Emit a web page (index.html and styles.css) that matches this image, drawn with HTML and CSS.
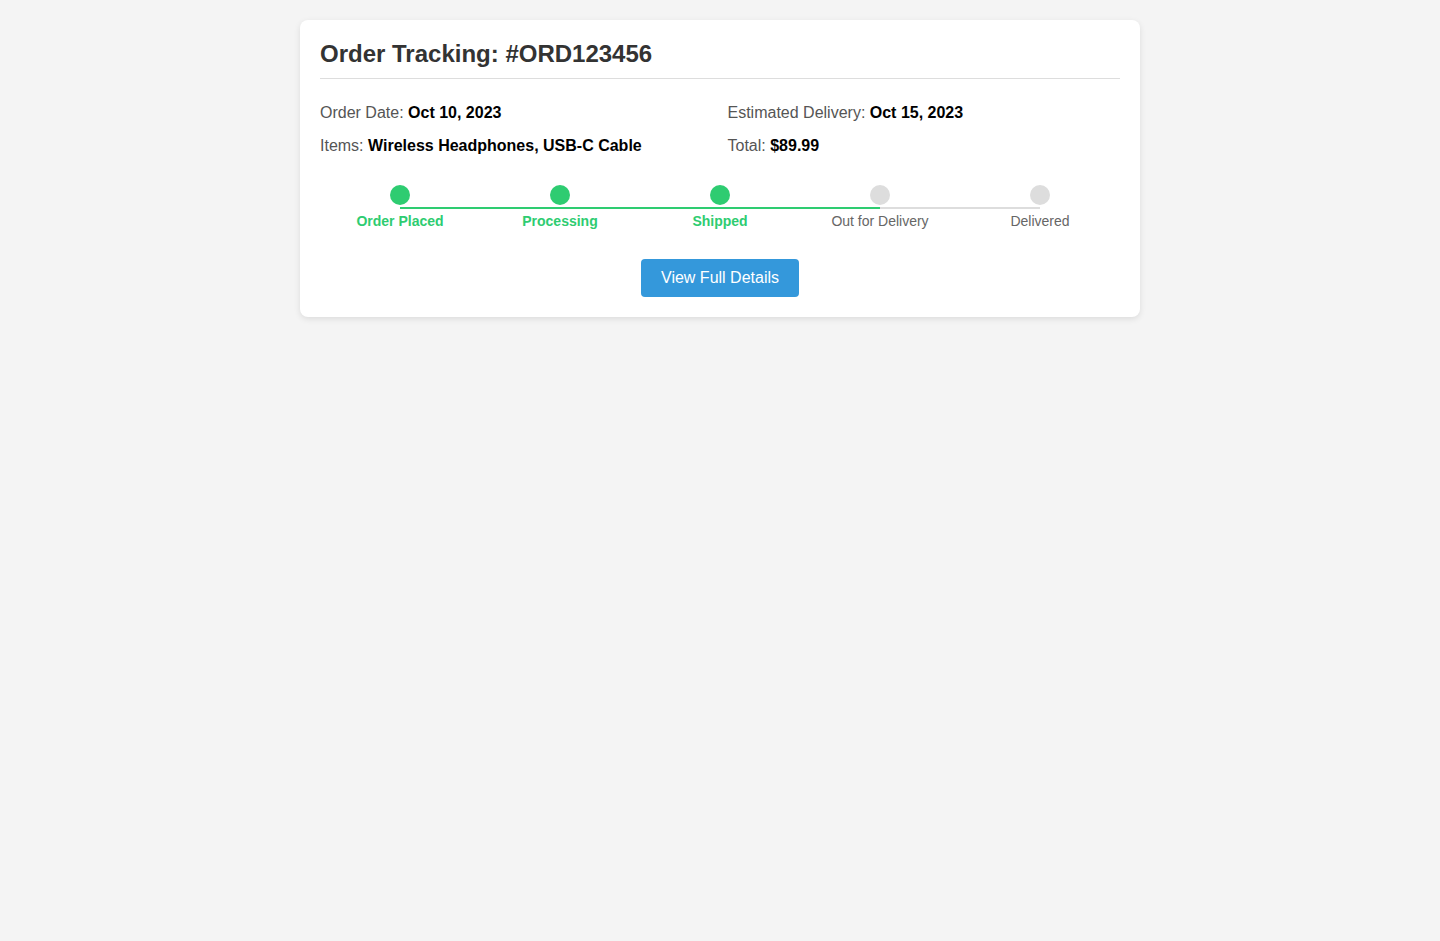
FILE: index.html
```html
<!DOCTYPE html>
<html lang="en">
<head>
<meta charset="utf-8">
<title>Order Tracking</title>
<link rel="stylesheet" href="styles.css">
</head>
<body>
<div class="card">
  <h2 class="title">Order Tracking: #ORD123456</h2>
  <div class="info">
    <div class="info-item">Order Date: <strong>Oct 10, 2023</strong></div>
    <div class="info-item">Estimated Delivery: <strong>Oct 15, 2023</strong></div>
    <div class="info-item">Items: <strong>Wireless Headphones, USB-C Cable</strong></div>
    <div class="info-item">Total: <strong>$89.99</strong></div>
  </div>
  <div class="steps">
    <div class="track"><div class="track-fill"></div></div>
    <div class="step done"><div class="dot"></div><div class="label">Order Placed</div></div>
    <div class="step done"><div class="dot"></div><div class="label">Processing</div></div>
    <div class="step done"><div class="dot"></div><div class="label">Shipped</div></div>
    <div class="step"><div class="dot"></div><div class="label">Out for Delivery</div></div>
    <div class="step"><div class="dot"></div><div class="label">Delivered</div></div>
  </div>
  <div class="actions">
    <button class="btn">View Full Details</button>
  </div>
</div>
</body>
</html>
```
FILE: styles.css
```css
html, body {
  margin: 0;
  padding: 0;
}
body {
  background: #f4f4f4;
  font-family: Arial, "Liberation Sans", Helvetica, sans-serif;
  padding: 20px 0;
}
.card {
  width: 800px;
  margin: 0 auto;
  background: #fff;
  border-radius: 8px;
  padding: 20px;
  box-shadow: 0 2px 6px rgba(0, 0, 0, 0.1);
}
.title {
  margin: 0 0 25px;
  font-size: 24px;
  font-weight: bold;
  color: #333;
  padding-bottom: 10px;
  border-bottom: 1px solid #ddd;
}
.info {
  display: grid;
  grid-template-columns: 1fr 1fr;
  gap: 15px;
  font-size: 16px;
  color: #555;
}
.info strong {
  color: #000;
}
.steps {
  position: relative;
  display: flex;
  margin-top: 30px;
}
.track {
  position: absolute;
  top: 22px;
  left: 80px;
  right: 80px;
  height: 2px;
  background: #ddd;
}
.track-fill {
  width: 75%;
  height: 100%;
  background: #2ecc71;
}
.step {
  flex: 1;
  display: flex;
  flex-direction: column;
  align-items: center;
  position: relative;
}
.dot {
  width: 20px;
  height: 20px;
  border-radius: 50%;
  background: #ddd;
  margin-bottom: 8px;
}
.label {
  font-size: 14px;
  color: #666;
  line-height: 16px;
}
.step.done .dot {
  background: #2ecc71;
}
.step.done .label {
  color: #2ecc71;
  font-weight: bold;
}
.actions {
  display: flex;
  justify-content: center;
  margin-top: 30px;
}
.btn {
  background: #3498db;
  color: #fff;
  border: none;
  border-radius: 4px;
  padding: 10px 20px;
  font-family: Arial, "Liberation Sans", Helvetica, sans-serif;
  font-size: 16px;
  cursor: pointer;
}
```
